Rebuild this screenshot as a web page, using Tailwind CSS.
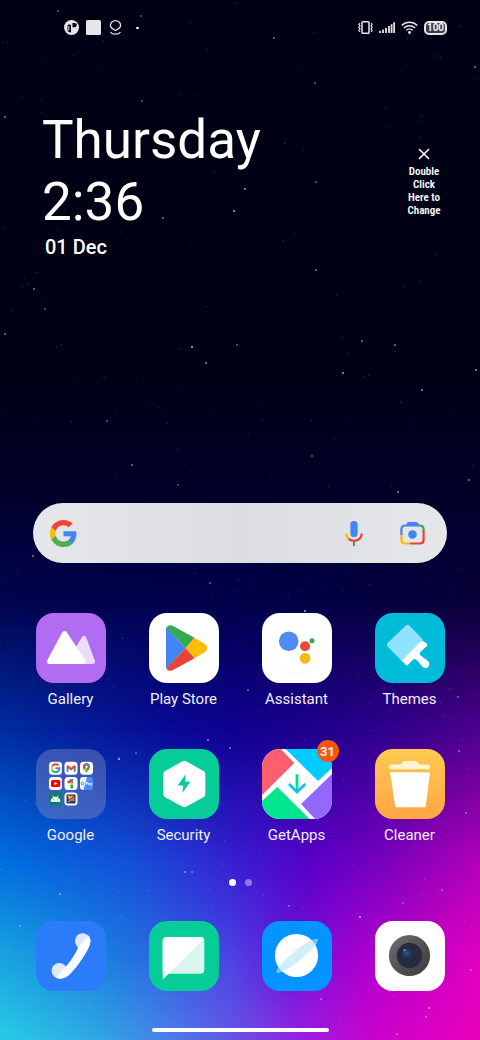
<!DOCTYPE html>
<html lang="en">
<head>
  <meta charset="UTF-8" />
  <meta name="viewport" content="width=device-width, initial-scale=1.0"/>
  <title>Home Screen</title>
  <script src="https://cdn.jsdelivr.net/npm/@tailwindcss/browser@4"></script>
</head>
<body class="bg-[#000014] font-[Roboto,sans-serif] text-white">
  <div class="relative isolate flex min-h-screen flex-col overflow-hidden pb-2">

    <!-- Wallpaper: colour rows fading into each other, stars on top -->
    <div class="absolute inset-0 -z-10 bg-linear-to-b from-[#000014] from-35% to-[#000030] to-53%">
      <div class="absolute inset-0 bg-[linear-gradient(90deg,#000450_0%,#00004c_50%,#080038_100%)] [mask-image:linear-gradient(transparent_47%,#000_59%)]"></div>
      <div class="absolute inset-0 bg-[linear-gradient(90deg,#002ca0_0%,#080a94_35%,#100090_50%,#28008c_75%,#4c008c_100%)] [mask-image:linear-gradient(transparent_58%,#000_70%)]"></div>
      <div class="absolute inset-0 bg-[linear-gradient(90deg,#0070e0_0%,#1450d8_28%,#3a1cd2_50%,#5a00c8_65%,#8000be_82%,#b400b8_100%)] [mask-image:linear-gradient(transparent_70%,#000_83%)]"></div>
      <div class="absolute inset-0 bg-[linear-gradient(90deg,#18a4e0_0%,#1e78e0_25%,#4a44e4_48%,#6a14d8_60%,#a800d0_75%,#e000c0_100%)] [mask-image:linear-gradient(transparent_83%,#000_92%)]"></div>
      <div class="absolute inset-0 bg-[linear-gradient(90deg,#28cce4_0%,#30a8e4_20%,#4c7ce8_36%,#6a50e4_50%,#9820e0_63%,#cc00cc_78%,#e800b8_100%)] [mask-image:linear-gradient(transparent_92%,#000_100%)]"></div>
      <svg id="stars" class="absolute inset-0 size-full" viewBox="0 0 480 1040" preserveAspectRatio="none" aria-hidden="true"></svg>
    </div>

    <!-- Status bar -->
    <header class="flex h-[55px] items-center justify-between pr-[33px] pl-16 text-[#e6e6ea]">
      <div class="flex items-center gap-[7px]">
        <svg class="size-[15px]" viewBox="0 0 15 15"><circle cx="7.5" cy="7.5" r="7.5" fill="currentColor"/><path d="M7 12.500V5.500c0-1.500-3.500-1.500-3.500 0v4.500c0 1.500 1.500 2.500 3.500 2.500zM8.500 3h2.200a1.700 1.700 0 0 1 0 4.200H8.500z" fill="#000014"/><path d="M4.800 6v4.500" stroke="currentColor" stroke-width="1"/></svg>
        <svg class="size-[15px]" viewBox="0 0 15 15"><rect width="15" height="15" rx="1.5" fill="currentColor"/></svg>
        <svg class="size-[15px]" viewBox="0 0 15 15" fill="none" stroke="currentColor" stroke-width="1.3"><path d="M7.5 10.5C4.8 8.8 2.4 7.8 2.4 5.4a5.1 4.7 0 0 1 10.2 0c0 2.4-2.4 3.4-5.1 5.1z"/><path d="M2.5 12c1 1.6 3 2.2 5 2.2s4-.6 5-2.2"/></svg>
        <span class="ml-[6px] h-[2px] w-[3px] rounded-full bg-white"></span>
      </div>
      <div class="flex items-center gap-[6px]">
        <svg class="size-[15px]" viewBox="0 0 15 15" fill="none" stroke="currentColor"><rect x="4" y="1.7" width="7" height="11.6" rx=".8" stroke-width="1.5"/><path d="M2 3L.8 4.5 2 6 .8 7.5 2 9 .8 10.500 2 12M13 3l1.200 1.500L13 6l1.200 1.500L13 9l1.200 1.500L13 12" stroke-width="1.2"/></svg>
        <svg class="h-[15px] w-4" viewBox="0 0 16 15" stroke="currentColor" stroke-width="1.800"><path d="M1 13v-2.200M4 13v-3.500M7 13V8M10 13V6M12.600 13V4.200M15.200 13V2.200"/></svg>
        <svg class="h-[15px] w-[17px]" viewBox="0 0 17 15" fill="none" stroke="currentColor" stroke-width="1.500"><path d="M.7 5.500a11 11 0 0 1 15.600 0M3 8a7.800 7.800 0 0 1 11 0M5.300 10.300a4.600 4.600 0 0 1 6.400 0"/><circle cx="8.500" cy="12.500" r="1.400" fill="currentColor" stroke="none"/></svg>
        <span class="flex h-[14px] w-[23px] items-center justify-center rounded-[5px] border-2 border-[#e6e6ea] bg-[#3c3c50] text-[10px] font-semibold text-white">100</span>
      </div>
    </header>

    <!-- Clock widget -->
    <section class="mt-[54px] flex items-start justify-between pr-10 pl-[42px]">
      <div>
        <h1 class="text-[53px] leading-[62px]">Thursday<br>2:36</h1>
        <p class="pl-[3px] text-[20px] leading-7 font-medium">01 Dec</p>
      </div>
      <button class="mt-[39px] flex w-8 flex-col items-center font-['Roboto_Condensed','Liberation_Sans_Narrow',Roboto,sans-serif] text-[11px] leading-[13px] font-semibold">
        <svg class="mb-[5px] size-3" viewBox="0 0 12 12" stroke="currentColor" stroke-width="1.600"><path d="M1 1l10 10M11 1L1 11"/></svg>
        <span>Double</span>
        <span>Click</span>
        <span class="whitespace-nowrap">Here to</span>
        <span>Change</span>
      </button>
    </section>

    <div class="flex-1"></div>

    <!-- Search -->
    <form class="mx-[33px] flex h-[60px] items-center rounded-full bg-linear-to-r from-[#e6e7ea] via-[#dcdde3] to-[#e6e7ea] pr-[22px] pl-[17px]">
      <svg class="size-[27px] shrink-0" viewBox="0 0 48 48"><path fill="#4285f4" d="M47 24.500c0-1.600-.2-3.200-.5-4.700H24v9h13c-.6 3-2.300 5.500-4.800 7.200v6H40c4.500-4.200 7-10.300 7-17.500z"/><path fill="#4caf50" d="M24 48c6.500 0 12-2.100 16-5.900L32.200 36c-2.200 1.400-4.900 2.300-8.200 2.300-6.300 0-11.600-4.200-13.500-9.900h-8v6.200C6.500 42.600 14.600 48 24 48z"/><path fill="#fbbc05" d="M10.500 28.400a14.400 14.400 0 0 1 0-9.200V13h-8a24 24 0 0 0 0 21.600z"/><path fill="#f44336" d="M24 9.500c3.500 0 6.700 1.200 9.200 3.600l6.900-6.900C35.900 2.400 30.500 0 24 0 14.600 0 6.500 5.400 2.500 13l8 6.200C12.400 13.600 17.700 9.500 24 9.500z"/></svg>
      <input type="text" aria-label="Search" class="min-w-0 flex-1 bg-transparent px-4 text-black outline-none"/>
      <button type="button" aria-label="Voice search" class="mr-[37px]">
        <svg class="h-[25px] w-[18px]" viewBox="0 0 18 25" fill="none"><rect x="5.400" y="0" width="7.200" height="16" rx="3.600" fill="#4285f4"/><path d="M9 19.500V25" stroke="#34a853" stroke-width="2.200"/><path d="M1.300 12.500c0 2.400 1 4.300 2.700 5.600" stroke="#fbbc05" stroke-width="2.200"/><path d="M3.600 17.800c3 2.600 7.800 2.600 10.800 0 1.500-1.300 2.300-3.100 2.300-5.300" stroke="#ea4335" stroke-width="2.200"/></svg>
      </button>
      <button type="button" aria-label="Search by image">
        <svg class="h-[23px] w-[25px]" viewBox="0 0 25 23" fill="none" stroke-width="2.200"><path d="M7 1.200C7.500.4 8 0 9 0h7c1 0 1.500.4 2 1.200L19.500 4h-14z" fill="#4285f4"/><path d="M1.400 13V7.500c0-2.500 1.600-4 4-4H19" stroke="#4285f4"/><path d="M18.500 3.500h1c2.600 0 4.100 1.500 4.100 4V9" stroke="#34a853"/><path d="M23.600 8.500V18c0 2.200-1.300 3.500-3.500 3.500H10" stroke="#ea4335"/><path d="M1.400 13v5c0 2.200 1.300 3.500 3.500 3.500H10" stroke="#fbbc05"/><circle cx="12.500" cy="12.500" r="4.300" fill="#4285f4"/></svg>
      </button>
    </form>

    <!-- App grid -->
    <main class="mt-[50px] grid grid-cols-4 gap-y-10 px-[14px] text-[15px] leading-5 text-[#f0effa]">
      <a href="#" class="flex flex-col items-center gap-[6px]">
        <svg class="size-[70px] rounded-[18px] bg-[#b26cf2]" viewBox="0 0 70 70" stroke-linejoin="round" stroke-width="5"><path d="M48 25.500L56.500 48.500H34z" fill="#ecdcfb" stroke="#ecdcfb"/><path d="M28.500 20.500L47 48.500H13.500z" fill="#fff" stroke="#fff"/></svg>
        <span>Gallery</span>
      </a>
      <a href="#" class="flex flex-col items-center gap-[6px]">
        <svg class="size-[70px] rounded-[18px] bg-white" viewBox="0 0 70 70"><path d="M17.500 14.500L36.700 35 17.500 55.500c-.4-.6-.5-1-.5-1.800V16.300c0-.8.100-1.300.5-1.800z" fill="#4285f4"/><path d="M17.400 14.800c1.100-2.600 3.900-3.400 6.600-1.900l21.500 11.900L36.700 35z" fill="#34a853"/><path d="M17.400 55.200c1.100 2.600 3.900 3.400 6.600 1.900l21.500-11.900L36.700 35z" fill="#ea4335"/><path d="M45.400 24.700l10.100 6.100c3.800 2.300 3.800 6.100 0 8.400l-10.100 6.100L36.700 35z" fill="#fbbc04"/></svg>
        <span>Play Store</span>
      </a>
      <a href="#" class="flex flex-col items-center gap-[6px]">
        <svg class="size-[70px] rounded-[18px] bg-white" viewBox="0 0 70 70"><circle cx="35" cy="35.500" r="26" fill="#f0f0f0"/><circle cx="35" cy="34.500" r="26.300" fill="#fff"/><circle cx="26.700" cy="28.300" r="9.800" fill="#4f8bf0"/><circle cx="43" cy="33.300" r="5" fill="#ea4a3c"/><circle cx="50" cy="27.700" r="2.500" fill="#34a853"/><circle cx="43" cy="45.300" r="5.400" fill="#f6bb12"/></svg>
        <span>Assistant</span>
      </a>
      <a href="#" class="flex flex-col items-center gap-[6px]">
        <svg class="size-[70px] rounded-[18px] bg-[#00bcd8]" viewBox="0 0 70 70"><path d="M46.500 27l5 3.300c1.200.9 1.100 2 .2 2.900l-6 5.600c-1.200 1.200-1.200 2.400-.1 3.600l7.400 5.500c3.800 3.600-.9 9.500-5.300 6.200l-6-7c-1.300-1.300-2.600-1.300-3.800-.3l-4.800 4.900c-.9.900-1.800.9-2.600 0L26 47z" fill="#fff"/><path d="M30.600 12.700c1.400-1.300 2.800-1.300 4.100 0L47.800 26.500 26.700 47.700 13 34c-1.500-1.500-1.500-3-.1-4.300z" fill="#8fe3ff"/></svg>
        <span>Themes</span>
      </a>

      <a href="#" class="flex flex-col items-center gap-[6px]">
        <svg class="size-[70px] rounded-[18px] bg-[#8a90c4]/40" viewBox="0 0 70 70">
          <g fill="#fff"><rect x="13" y="12.700" width="13" height="13" rx="3.500"/><rect x="28.500" y="12.700" width="13" height="13" rx="3.500"/><rect x="44" y="12.700" width="13" height="13" rx="3.500"/><rect x="13" y="28" width="13" height="13" rx="3.500"/><rect x="28.500" y="28" width="13" height="13" rx="3.500"/><rect x="28.500" y="43.500" width="13" height="13" rx="3.500"/></g>
          <rect x="13" y="43.500" width="13" height="13" rx="3" fill="#0c8068"/>
          <g fill="none" stroke-width="1.900"><path d="M22.500 16.200a4.200 4.200 0 0 0-6.300 1" stroke="#ea4335"/><path d="M16.200 17.200a4 4 0 0 0 0 4" stroke="#fbbc04"/><path d="M16.200 21.200a4.200 4.200 0 0 0 5.800 1.200" stroke="#34a853"/><path d="M19.500 19.300h4c0 1.400-.4 2.300-1.500 3.100" stroke="#4285f4"/></g>
          <path d="M31.500 22.800v-5.600" stroke="#4285f4" stroke-width="2"/><path d="M38.700 22.800v-5.600" stroke="#34a853" stroke-width="2"/><path d="M31.200 16.800l3.900 3.200 3.900-3.200" fill="none" stroke="#ea4335" stroke-width="2.200"/>
          <path d="M50.500 24.300c-.5-2.800-3.500-3.500-3.500-6.500a3.500 3.500 0 0 1 7 0c0 3-3 3.700-3.500 6.500z" fill="#34a853"/><path d="M47 18.500a3.600 3.600 0 0 1 4-4.100l-.5 3.600-2.800 2.800z" fill="#ea4335"/><path d="M50.500 14.300a3.500 3.500 0 0 1 3.400 2.700l-3.400 1z" fill="#4285f4"/><path d="M47.700 20.800l2.800-2.800v4z" fill="#fbbc04"/><circle cx="50.500" cy="17.800" r="1.200" fill="#fff"/>
          <rect x="15" y="31" width="9.300" height="7" rx="1.500" fill="#f00"/><path d="M18.500 32.800v3.400l3-1.700z" fill="#fff"/>
          <path d="M35.800 30v4.500" stroke="#4285f4" stroke-width="2.700"/><path d="M35.800 33.500V37" stroke="#fbbc04" stroke-width="2.700"/><path d="M35.800 36v3.500" stroke="#34a853" stroke-width="2.700"/><path d="M31.800 33.800l3.500-2.600" stroke="#ea4335" stroke-width="2.500"/>
          <path d="M47 28h7a3 3 0 0 1 3 3v7a3 3 0 0 1-3 3h-8z" fill="#4c8cf4"/><path d="M47 28h4l-3.500 13c-2.500 0-3.500-1-3.500-3v-7c0-2 1-3 3-3z" fill="#f2f6fe"/><circle cx="46.500" cy="34.500" r="1.300" fill="none" stroke="#4285f4"/><text x="49.500" y="36" font-size="4" fill="#fff" font-weight="700">Pay</text>
          <path d="M15 52.500a4.500 4.500 0 0 1 9 0zM16.500 46.500l1.500 2.500M22.500 46.500L21 49" fill="#fff" stroke="#fff" stroke-width=".7"/><circle cx="17.600" cy="50.800" r=".5" fill="#0c8068"/><circle cx="21.400" cy="50.800" r=".5" fill="#0c8068"/>
          <rect x="30.500" y="45.500" width="9" height="9" fill="#3d3344"/><path d="M31.500 46.500l6.500.5-5 4z" fill="#f5ab3d"/><path d="M38 47.500l.8 4.500-4.800 0z" fill="#d86b9c"/><path d="M32 53l3.500-2.500" stroke="#91e4d0"/>
        </svg>
        <span>Google</span>
      </a>
      <a href="#" class="flex flex-col items-center gap-[6px]">
        <svg class="size-[70px] rounded-[18px] bg-[#06cc98]" viewBox="0 0 70 70"><path d="M35.300 15.500L52.600 25.200V45L35.300 54.500 18 45V25.200z" fill="#fff" stroke="#fff" stroke-width="7.500" stroke-linejoin="round"/><path d="M36.800 25.200L28.700 36.500h5.500l-.8 7.600 8.100-11.700h-5.400z" fill="#06cc98"/></svg>
        <span>Security</span>
      </a>
      <a href="#" class="flex flex-col items-center gap-[6px]">
        <span class="relative">
          <svg class="size-[70px] rounded-[18px] bg-white" viewBox="0 0 70 70"><path d="M0 0h18.700l13.600 14L0 46z" fill="#ff5f6d"/><path d="M23.700 0L56 32l14-13V0z" fill="#00ccff"/><path d="M70 25L39 55l14 15h17z" fill="#9268ff"/><path d="M0 52l15.300-14L47.500 70H0z" fill="#00e68c"/><path d="M27 35l8 8 8.300-8" fill="none" stroke="#10c4e8" stroke-width="2.800"/><path d="M35 25.300V41" stroke="#00dc94" stroke-width="2.800"/></svg>
          <span class="absolute -top-[9px] -right-[7px] flex size-[22px] items-center justify-center rounded-full bg-[#fb560a] text-[13px] leading-none font-semibold text-white">31</span>
        </span>
        <span>GetApps</span>
      </a>
      <a href="#" class="flex flex-col items-center gap-[6px]">
        <svg class="size-[70px] rounded-[18px] bg-linear-to-b from-[#ffca50] to-[#ffa545]" viewBox="0 0 70 70"><path d="M16 15.500h8.500c2 0 3-3.500 5-3.500h11c2 0 3 3.500 5 3.500H53c1.500 0 2 .7 2 2v1.200c0 1-.5 1.600-1.500 1.600h-38c-1 0-1.500-.6-1.500-1.600v-1.200c0-1.300.5-2 2-2z" fill="#fff3d4"/><path d="M15 23.300h40L50.900 56.500c-.2 1.300-.8 1.800-2 1.800H22c-1.200 0-1.800-.5-2-1.800z" fill="#fff"/></svg>
        <span>Cleaner</span>
      </a>
    </main>

    <!-- Page dots -->
    <div class="mt-[33px] flex h-2 items-center justify-center gap-[9px]">
      <span class="size-[7px] rounded-full bg-white"></span>
      <span class="size-[7px] rounded-full bg-white/40"></span>
    </div>

    <!-- Dock -->
    <nav class="mt-[35px] grid grid-cols-4 justify-items-center px-[14px]">
      <a href="#" aria-label="Phone">
        <svg class="size-[70px] rounded-[18px] bg-[#2b7cf8]" viewBox="0 0 70 70"><circle cx="46.700" cy="20" r="7.700" fill="#e0e8fd"/><circle cx="23.300" cy="49.700" r="7.700" fill="#e0e8fd"/><path d="M52.500 14.800c2.800 2.800 2.400 8-.2 12.600-4.400 8.600-10.500 17.300-17.300 24.600-4.200 5-9.500 6.900-14.500 4.900L29 46.500c4.500-5 8-10 11-15.200 1-2.300 1.600-4.800 3-6.300z" fill="#fff"/></svg>
      </a>
      <a href="#" aria-label="Messages">
        <svg class="size-[70px] rounded-[18px] bg-[#06cc98]" viewBox="0 0 70 70"><rect x="13.700" y="16" width="41.600" height="36.700" rx="4" fill="#d8f5ee"/><path d="M17.700 16h33.600c1.800 0 3 .6 3.600 1.800L14 58.300c-.2 0-.3-.1-.3-.4V20c0-2.500 1.500-4 4-4z" fill="#fff"/></svg>
      </a>
      <a href="#" aria-label="Browser">
        <svg class="size-[70px] rounded-[18px] bg-[#0494ff]" viewBox="0 0 70 70"><circle cx="34.500" cy="34.500" r="21.600" fill="#fff"/><ellipse cx="35.200" cy="34.800" rx="26.500" ry="5" transform="rotate(-39 35.200 34.800)" fill="#b4e4fc" fill-opacity=".62"/></svg>
      </a>
      <a href="#" aria-label="Camera">
        <svg class="size-[70px] rounded-[18px] bg-white" viewBox="0 0 70 70">
          <defs>
            <linearGradient id="rim" x1="0" y1="0" x2="1" y2="1"><stop stop-color="#707070"/><stop offset="1" stop-color="#383838"/></linearGradient>
            <radialGradient id="lens" cx=".35" cy=".35" r=".6"><stop stop-color="#2c5a74"/><stop offset=".5" stop-color="#20304e"/><stop offset="1" stop-color="#262640"/></radialGradient>
          </defs>
          <circle cx="34.500" cy="34.500" r="20.600" fill="url(#rim)"/><circle cx="34.500" cy="34.500" r="12.700" fill="#2a2a3e"/><circle cx="34" cy="34.500" r="8" fill="url(#lens)"/><circle cx="29.500" cy="29" r="1.200" fill="#4d9cae"/>
        </svg>
      </a>
    </nav>

    <div class="mx-auto mt-[37px] h-1 w-[177px] rounded-full bg-white"></div>
  </div>

  <script>
    // bright stars: x, y, opacity
    const bright = [
      [141, 16, 0.5], [58, 11, 0.5], [274, 38, 0.6], [5, 117, 0.6], [475, 67, 0.6], [142, 101, 0.5],
      [315, 83, 0.5], [245, 189, 0.8], [234, 211, 0.8], [163, 218, 0.6], [316, 182, 0.5], [316, 270, 0.6],
      [192, 347, 0.9], [206, 363, 0.7], [237, 345, 0.5], [34, 289, 0.6], [45, 309, 0.5], [5, 334, 0.6],
      [343, 373, 0.8], [422, 390, 0.7], [476, 370, 0.7], [362, 341, 0.6], [395, 345, 0.6], [107, 421, 0.5],
      [132, 465, 0.6], [312, 456, 0.5], [398, 492, 0.6], [469, 480, 0.6], [178, 485, 0.4], [33, 556, 0.6],
      [305, 611, 0.8], [210, 583, 0.5], [248, 690, 0.5], [458, 697, 0.5], [119, 759, 0.9], [136, 753, 0.4],
      [208, 740, 0.7], [230, 748, 0.6], [60, 894, 0.7], [185, 872, 0.6], [192, 872, 0.5], [20, 926, 0.5],
      [360, 917, 0.9], [289, 906, 0.5], [429, 1008, 0.7], [426, 1017, 0.5], [397, 1034, 0.5], [321, 999, 0.5],
      [442, 890, 0.5], [403, 903, 0.4], [459, 751, 0.5], [466, 813, 0.5], [471, 970, 0.5], [218, 955, 0.5]
    ];

    let seed = 7;
    function rand() {
      seed = (seed * 16807) % 2147483647;
      return seed / 2147483647;
    }

    const dust = Array.from({ length: 340 }, () => [rand() * 480, rand() * 1040, 0.08 + rand() * 0.17]);
    const dot = (s, r) => `<circle cx="${s[0]}" cy="${s[1]}" r="${r}" fill="#dfe8ea" opacity="${s[2]}"/>`;
    document.getElementById('stars').innerHTML =
      dust.map(s => dot(s, 0.7)).join('') + bright.map(s => dot(s, 0.9)).join('');
  </script>
</body>
</html>
